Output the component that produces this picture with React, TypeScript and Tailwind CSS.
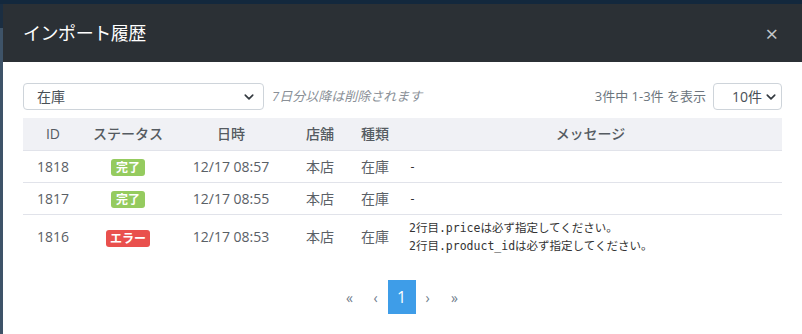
const rows = [
  { id: 1818, status: 'done', date: '12/17 08:57', store: '本店', kind: '在庫', msg: ['-'] },
  { id: 1817, status: 'done', date: '12/17 08:55', store: '本店', kind: '在庫', msg: ['-'] },
  {
    id: 1816,
    status: 'error',
    date: '12/17 08:53',
    store: '本店',
    kind: '在庫',
    msg: ['2行目.priceは必ず指定してください。', '2行目.product_idは必ず指定してください。'],
  },
];

const Chevron = () => (
  <svg width="10" height="10" viewBox="0 0 16 16" className="text-[#343a40]">
    <path d="M2 5l6 6 6-6" fill="none" stroke="currentColor" strokeWidth="2.6" strokeLinecap="round" strokeLinejoin="round" />
  </svg>
);

const App = () => {
  return (
    <div
      className="w-[802px] h-[334px] overflow-hidden bg-[#13283d] pt-[4px] flex"
      style={{ fontFamily: '"Open Sans", "Noto Sans CJK JP", sans-serif' }}
    >
      <div className="w-[3px] flex flex-col">
        <div className="h-[24px] bg-[#1b2e42]" />
        <div className="flex-1 bg-[#3e5368]" />
      </div>
      <div className="flex-1 flex flex-col bg-white">
        {/* header */}
        <div className="h-[58px] bg-[#2b3035] flex items-center justify-between pl-[20px] pr-[24px]">
          <h2 className="text-[18px] text-white font-normal tracking-tight">インポート履歴</h2>
          <span className="text-[#c2c6ca] text-[22px] leading-none">×</span>
        </div>

        {/* body */}
        <div className="px-[20px] pt-[21px]">
          <div className="flex items-center justify-between h-[27px]">
            <div className="flex items-center gap-[8px]">
              <div className="w-[241px] h-[27px] border border-[#ced4da] rounded-[4px] flex items-center justify-between pl-[13px] pr-[9px] text-[14px] text-[#495057]">
                <span>在庫</span>
                <Chevron />
              </div>
              <span className="text-[13px] italic text-[#8a9097]">7日分以降は削除されます</span>
            </div>
            <div className="flex items-center gap-[7px]">
              <span className="text-[13px] text-[#6c757d]">3件中 1-3件 を表示</span>
              <div className="w-[69px] h-[27px] border border-[#ced4da] rounded-[4px] flex items-center justify-between pl-[18px] pr-[5px] text-[14px] text-[#495057]">
                <span>10件</span>
                <Chevron />
              </div>
            </div>
          </div>

          <table className="mt-[8px] w-[759px] border-collapse text-[14px] text-[#5a6066] table-fixed">
            <colgroup>
              <col className="w-[60px]" />
              <col className="w-[90px]" />
              <col className="w-[116px]" />
              <col className="w-[62px]" />
              <col className="w-[48px]" />
              <col />
            </colgroup>
            <thead>
              <tr className="bg-[#f0f1f5] h-[32px] text-[#555b61] border-b border-[#e1e3ea]">
                <th className="font-medium">ID</th>
                <th className="font-medium">ステータス</th>
                <th className="font-medium">日時</th>
                <th className="font-medium">店舗</th>
                <th className="font-medium">種類</th>
                <th className="font-medium">メッセージ</th>
              </tr>
            </thead>
            <tbody>
              {rows.map((r, i) => (
                <tr key={r.id} className={i < rows.length - 1 ? 'border-b border-[#e1e3ea]' : ''}>
                  <td className={`text-center ${r.msg.length > 1 ? 'h-[44px]' : 'h-[32px]'}`}>{r.id}</td>
                  <td className="text-center">
                    {r.status === 'done' ? (
                      <span className="inline-block bg-[#95cb5f] text-white text-[12px] font-bold rounded-[3px] px-[5px] leading-[17px] align-middle">
                        完了
                      </span>
                    ) : (
                      <span className="inline-block bg-[#e9504d] text-white text-[12px] font-bold rounded-[3px] px-[4px] leading-[17px] align-middle">
                        エラー
                      </span>
                    )}
                  </td>
                  <td className="text-center">{r.date}</td>
                  <td className="text-center">{r.store}</td>
                  <td className="text-center">{r.kind}</td>
                  <td
                    className="pl-[10px] text-[11.5px] text-[#333] leading-[18px] pt-[2px]"
                    style={{ fontFamily: '"DejaVu Sans Mono", "Noto Sans CJK JP", monospace' }}
                  >
                    {r.msg.map((m) => (
                      <div key={m}>{m}</div>
                    ))}
                  </td>
                </tr>
              ))}
            </tbody>
          </table>

          <div className="mt-[22px] flex justify-center items-center text-[14px] text-[#6f7d8c]">
            <span className="w-[28px] text-center">«</span>
            <span className="w-[24px] text-center">‹</span>
            <span className="w-[28px] h-[34px] bg-[#3e9de8] text-white text-[16px] flex items-center justify-center">1</span>
            <span className="w-[24px] text-center">›</span>
            <span className="w-[30px] text-center">»</span>
          </div>
        </div>
      </div>
    </div>
  );
};

export default App;
